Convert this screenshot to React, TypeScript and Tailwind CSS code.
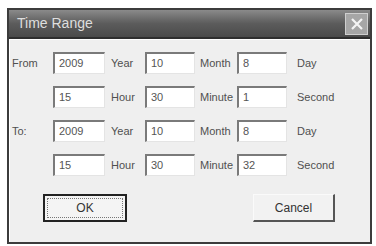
const rows: Array<{ lead: string; cells: Array<{ value: string; unit: string }> }> = [
  {
    lead: `From`,
    cells: [
      { value: `2009`, unit: `Year` },
      { value: `10`, unit: `Month` },
      { value: `8`, unit: `Day` },
    ],
  },
  {
    lead: ``,
    cells: [
      { value: `15`, unit: `Hour` },
      { value: `30`, unit: `Minute` },
      { value: `1`, unit: `Second` },
    ],
  },
  {
    lead: `To:`,
    cells: [
      { value: `2009`, unit: `Year` },
      { value: `10`, unit: `Month` },
      { value: `8`, unit: `Day` },
    ],
  },
  {
    lead: ``,
    cells: [
      { value: `15`, unit: `Hour` },
      { value: `30`, unit: `Minute` },
      { value: `32`, unit: `Second` },
    ],
  },
]

const unitWidths = [`w-[40px] pl-[6px]`, `w-[42px] pl-[5px]`, `pl-[10px]`]
const fieldWidths = [`w-[52px]`, `w-[50px]`, `w-[50px]`]

const Field = ({ value, width }: { value: string; width: string }) => (
  <div
    className={`${width} h-[22px] border-t-2 border-l-2 border-r border-b border-t-[#7a7a7a] border-l-[#7a7a7a] border-r-[#e4e4e4] border-b-[#e4e4e4] bg-white pl-[4px] pt-[2px] text-[11px] leading-[14px] text-[#555]`}
  >
    {value}
  </div>
)

const App: React.FC = () => {
  return (
    <div
      className="h-[246px] w-[376px] bg-white pl-[7px] pt-[8px]"
      style={{ fontFamily: `"Liberation Sans", Arial, sans-serif` }}
    >
      <div className="flex h-[236px] w-[365px] flex-col border-2 border-[#3c3c3c] bg-[#efefef]">
        {/* title bar */}
        <div className="flex h-[29px] items-center justify-between border-b-2 border-[#2e2e2e] bg-gradient-to-b from-[#8a8a8a] via-[#5c5c5c] to-[#4a4a4a] pl-[8px] pr-[2px]">
          <span className="text-[14px] text-[#dedede]">Time Range</span>
          <div className="flex h-[22px] w-[23px] items-center justify-center border border-[#cfcfcf] bg-[#a6a6a6]">
            <svg width="14" height="14" viewBox="0 0 14 14">
              <path d="M2 2 L12 12 M12 2 L2 12" stroke="#f4f4f4" strokeWidth="2.2" />
            </svg>
          </div>
        </div>

        <div className="flex flex-1 flex-col border-l border-t border-white pl-[2px] pt-[12px] text-[11px] text-[#505050]">
          <div className="flex flex-col gap-[12px]">
            {rows.map((row, i) => (
              <div key={i} className="flex h-[22px] items-center">
                <span className="w-[41px]">{row.lead}</span>
                {row.cells.map((cell, j) => (
                  <div key={j} className="flex items-center">
                    <Field value={cell.value} width={fieldWidths[j]} />
                    <span className={unitWidths[j]}>{cell.unit}</span>
                  </div>
                ))}
              </div>
            ))}
          </div>

          <div className="mt-[18px] flex">
            <div className="ml-[31px] flex h-[28px] w-[84px] items-center justify-center border-2 border-[#222] bg-[#f4f4f4] p-[2px]">
              <div className="flex h-full w-full items-center justify-center border border-dotted border-[#777] text-[12px] text-[#333]">
                OK
              </div>
            </div>
            <div className="ml-[126px] flex h-[28px] w-[82px] items-center justify-center border-t border-l border-r-2 border-b-2 border-t-[#fafafa] border-l-[#fafafa] border-r-[#555] border-b-[#555] bg-[#f2f2f2] text-[12px] text-[#333]">
              Cancel
            </div>
          </div>
        </div>
      </div>
    </div>
  )
}

export default App
